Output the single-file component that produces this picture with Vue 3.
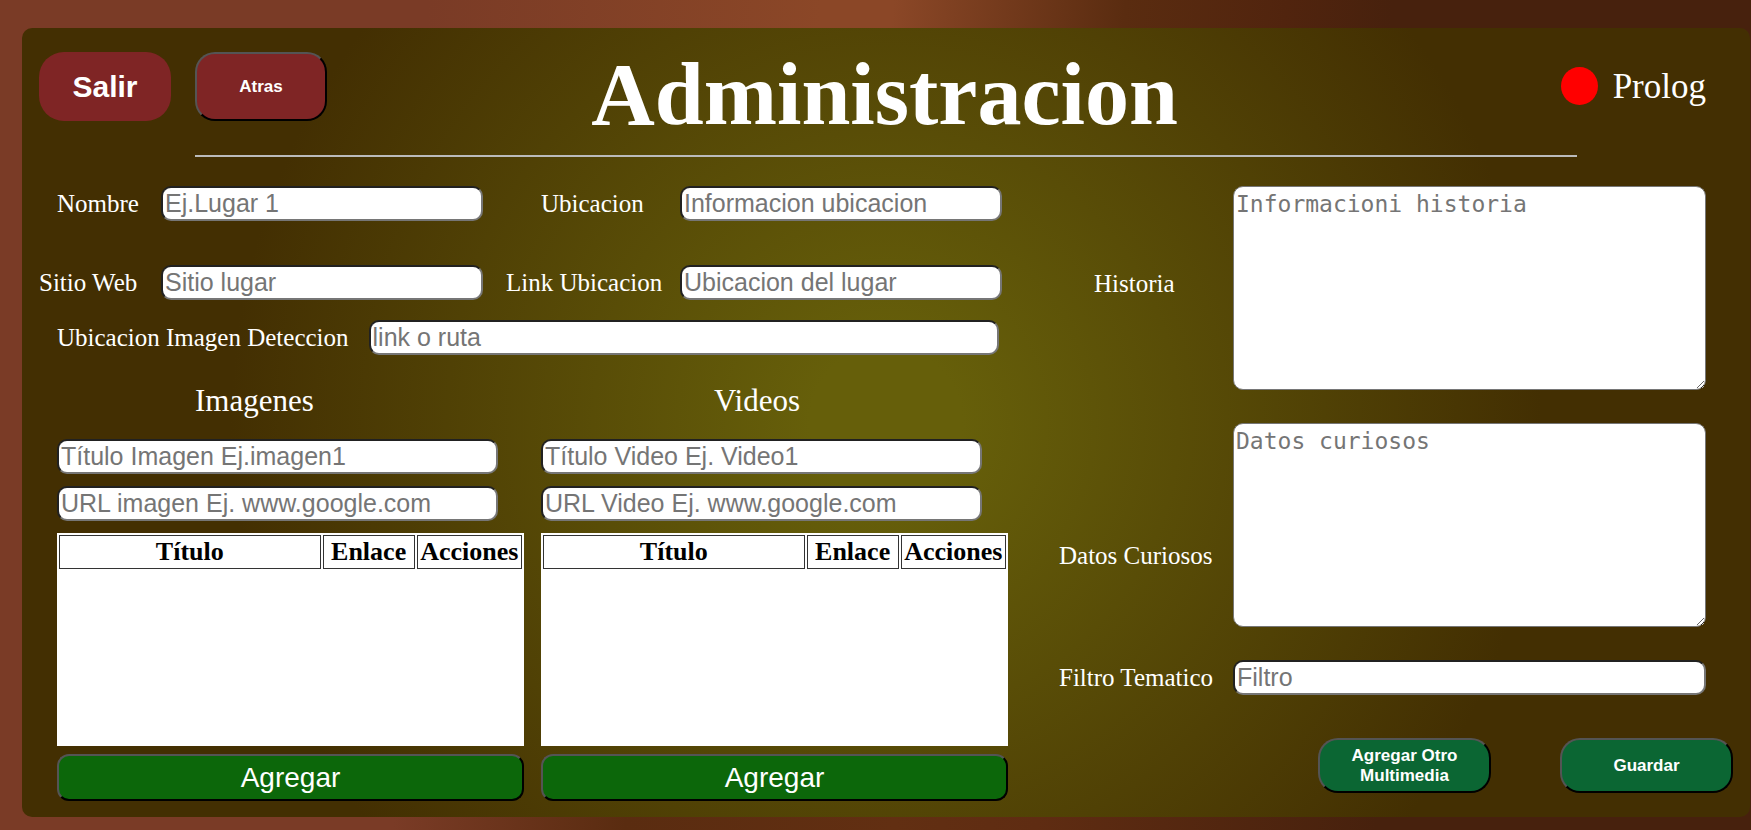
<script setup>
import { ref, reactive } from 'vue'

const place = reactive({
  name: '',
  location: '',
  website: '',
  locationLink: '',
  detectionImage: '',
  history: '',
  facts: '',
  filter: '',
})

const media = ref([
  {
    id: 'imagen',
    heading: 'Imagenes',
    titleHint: 'Título Imagen Ej.imagen1',
    urlHint: 'URL imagen Ej. www.google.com',
    title: '',
    url: '',
    rows: [],
  },
  {
    id: 'video',
    heading: 'Videos',
    titleHint: 'Título Video Ej. Video1',
    urlHint: 'URL Video Ej. www.google.com',
    title: '',
    url: '',
    rows: [],
  },
])

function addMedia(group) {
  if (!group.title) return
  group.rows.push({ title: group.title, url: group.url })
  group.title = ''
  group.url = ''
}
</script>

<template>
  <div class="page">
    <main class="panel">
      <header class="top">
        <nav class="nav">
          <button type="button" class="exit">Salir</button>
          <button type="button" class="back">Atras</button>
        </nav>
        <h1>Administracion</h1>
        <div class="status">
          <span class="lamp"></span>
          <span>Prolog</span>
        </div>
      </header>
      <hr class="rule" />

      <form class="form" @submit.prevent>
        <section class="left">
          <div class="fields">
            <label class="inner" for="name">Nombre</label>
            <input id="name" v-model="place.name" type="text" placeholder="Ej.Lugar 1" />
            <label class="second" for="location">Ubicacion</label>
            <input id="location" v-model="place.location" type="text" placeholder="Informacion ubicacion" />
            <label for="website">Sitio Web</label>
            <input id="website" v-model="place.website" type="text" placeholder="Sitio lugar" />
            <label for="link">Link Ubicacion</label>
            <input id="link" v-model="place.locationLink" type="text" placeholder="Ubicacion del lugar" />
          </div>

          <div class="detection">
            <label for="detection">Ubicacion Imagen Deteccion</label>
            <input id="detection" v-model="place.detectionImage" type="text" placeholder="link o ruta" />
          </div>

          <div class="media">
            <section v-for="group in media" :key="group.id" :class="['group', group.id]">
              <h2>{{ group.heading }}</h2>
              <input v-model="group.title" type="text" :aria-label="group.titleHint" :placeholder="group.titleHint" />
              <input v-model="group.url" type="text" :aria-label="group.urlHint" :placeholder="group.urlHint" />
              <div class="list">
                <table>
                  <thead>
                    <tr>
                      <th class="wide">Título</th>
                      <th class="mid">Enlace</th>
                      <th>Acciones</th>
                    </tr>
                  </thead>
                  <tbody>
                    <tr v-for="(row, i) in group.rows" :key="i">
                      <td>{{ row.title }}</td>
                      <td><a :href="row.url">Ver</a></td>
                      <td><button type="button" @click="group.rows.splice(i, 1)">Quitar</button></td>
                    </tr>
                  </tbody>
                </table>
              </div>
              <button type="button" class="add" @click="addMedia(group)">Agregar</button>
            </section>
          </div>
        </section>

        <section class="right">
          <div class="details">
            <label class="history" for="history">Historia</label>
            <textarea id="history" v-model="place.history" placeholder="Informacioni historia"></textarea>
            <label class="facts" for="facts">Datos Curiosos</label>
            <textarea id="facts" v-model="place.facts" placeholder="Datos curiosos"></textarea>
            <label for="filter">Filtro Tematico</label>
            <input id="filter" v-model="place.filter" type="text" placeholder="Filtro" />
          </div>
          <div class="actions">
            <button type="button" class="save">Agregar Otro Multimedia</button>
            <button type="submit" class="save">Guardar</button>
          </div>
        </section>
      </form>
    </main>
  </div>
</template>

<style>
body {
  margin: 0;
}
</style>

<style scoped>
* {
  box-sizing: border-box;
}

.page {
  min-height: 100vh;
  padding: 28px 1px 13px 22px;
  color: #fff;
  font: 25px/29px "Liberation Serif", "Times New Roman", serif;
  background:
    linear-gradient(95deg, #7a3b26 24%, #8b4727 46%, #8b4727 50%, #5a2c10 63%, #51240e 72%, #47210d 78%) top / 100% 50% no-repeat,
    linear-gradient(95deg, #7a3b26 24%, #5a2c10 37%, #622f12 52%, #5f2c12 60%, #47210d 79%) bottom / 100% 50% no-repeat;
}

.panel {
  min-height: 789px;
  padding-bottom: 16px;
  border-radius: 10px;
  background: radial-gradient(circle, #665f0a 8%, #432f02 69%);
}

.top {
  display: grid;
  grid-template-columns: 1fr auto 1fr;
  align-items: start;
  height: 127px;
  padding: 24px 44px 0 17px;
}

.nav {
  display: flex;
  gap: 24px;
}

button {
  color: #fff;
  font: bold 17px/20px "Liberation Sans", Arial, sans-serif;
}

.exit,
.back {
  width: 132px;
  height: 69px;
  border-radius: 25px;
  background: #7f2525;
}

.exit {
  border: 0;
  font-size: 30px;
}

.back {
  border: 2px outset #000;
  border-radius: 20px;
}

h1 {
  margin: 0;
  padding-left: 24px;
  font-size: 88px;
  line-height: 86px;
}

.status {
  display: flex;
  justify-content: flex-end;
  align-items: center;
  gap: 15px;
  height: 68px;
  font-size: 35px;
}

.lamp {
  width: 37px;
  height: 38px;
  border-radius: 50%;
  background: #f00;
}

.rule {
  width: 80%;
  height: 2px;
  margin: 0 auto;
  border: 0;
  background: #bbb;
}

.form {
  display: grid;
  grid-template-columns: 986px 1fr;
  align-items: start;
  padding-top: 29px;
}

input,
textarea {
  min-width: 0;
  border-radius: 10px;
  background: #fff;
  color: #000;
}

input {
  width: 100%;
  height: 35px;
  padding: 1px 2px;
  border: 2px inset #767676;
  font: 25px/29px "Liberation Sans", Arial, sans-serif;
}

textarea {
  display: block;
  width: 100%;
  height: 204px;
  padding: 2px;
  border: 1px solid #767676;
  font: 23px/30px "DejaVu Sans Mono", monospace;
  resize: both;
}

input::placeholder,
textarea::placeholder {
  color: #757575;
  opacity: 1;
}

.fields {
  display: grid;
  grid-template-columns: 122px 1fr 197px 1fr;
  row-gap: 44px;
  align-items: center;
  padding: 0 6px 0 17px;
}

.fields label {
  white-space: nowrap;
}

.fields label:nth-of-type(even) {
  padding-left: 23px;
}

.fields .inner {
  padding-left: 18px;
}

.fields label.second {
  padding-left: 58px;
}

.detection {
  display: flex;
  align-items: center;
  gap: 20px;
  padding: 20px 9px 0 35px;
}

.detection label {
  flex: none;
}

.media {
  display: grid;
  grid-template-columns: 1fr 1fr;
  gap: 17px;
  padding: 28px 0 0 35px;
}

.group {
  display: flex;
  flex-direction: column;
  align-items: flex-start;
}

.group h2 {
  margin: 0 0 20px;
  padding-left: 138px;
  font-size: 31px;
  font-weight: normal;
  line-height: 36px;
}

.video h2 {
  padding-left: 173px;
}

.group > input {
  width: 441px;
  margin-bottom: 12px;
}

.list {
  width: 100%;
  height: 213px;
  overflow: auto;
  background: #fff;
  color: #000;
}

table {
  width: 100%;
  border-spacing: 2px;
}

th {
  padding: 1px;
  border: 1px solid #333;
  font-size: 26px;
  line-height: 30px;
}

.wide {
  width: 57%;
}

.mid {
  width: 92px;
}

.add {
  width: 100%;
  height: 47px;
  margin-top: 8px;
  border: 2px outset #000;
  border-radius: 12px;
  background: #0c670a;
  font-size: 28px;
  font-weight: normal;
}

.details {
  display: grid;
  grid-template-columns: 174px 1fr;
  row-gap: 33px;
  align-items: center;
  padding: 0 44px 0 51px;
}

.history {
  padding: 0 0 10px 35px;
}

.facts {
  padding-top: 60px;
}

.actions {
  display: flex;
  justify-content: flex-end;
  gap: 69px;
  padding: 43px 17px 0 0;
}

.save {
  width: 173px;
  height: 55px;
  border: 2px outset #000;
  border-radius: 20px;
  background: #0b6633;
}
</style>
